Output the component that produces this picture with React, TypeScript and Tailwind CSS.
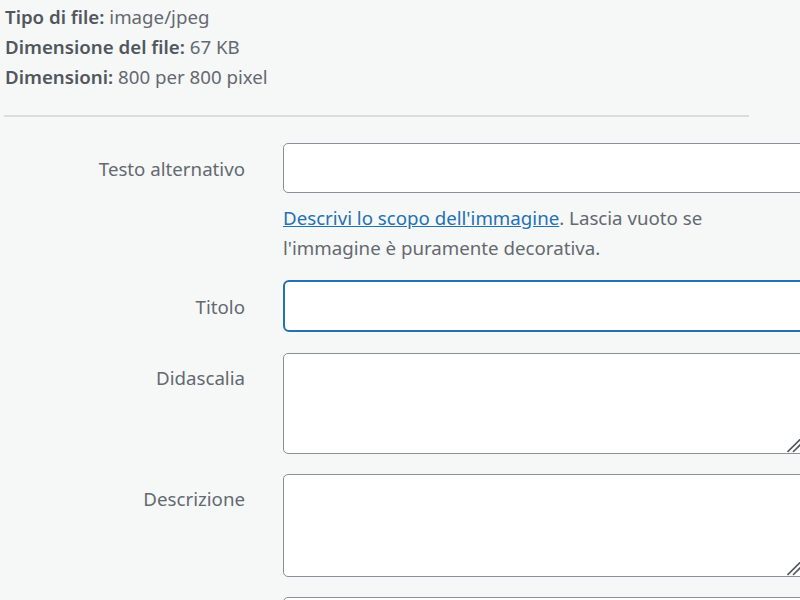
import React from "react";

function Grip() {
  return (
    <svg
      className="absolute left-[504px] bottom-[1px] pointer-events-none"
      width="16"
      height="14"
      viewBox="0 0 16 14"
    >
      <line x1="0.5" y1="13" x2="13.5" y2="0" stroke="#50575e" strokeWidth="1.6" />
      <line x1="6" y1="13" x2="16" y2="3" stroke="#50575e" strokeWidth="1.6" />
    </svg>
  );
}

export default function App() {
  return (
    <div className="w-[800px] h-[600px] overflow-hidden bg-[#f6f7f7] text-[18.7px] leading-[30px] text-[#646970] font-['Noto_Sans',sans-serif]">
      <div className="pl-[5px] pt-[2px]">
        <div><b className="font-semibold text-[#50575e]">Tipo di file:</b> image/jpeg</div>
        <div><b className="font-semibold text-[#50575e]">Dimensione del file:</b> 67 KB</div>
        <div><b className="font-semibold text-[#50575e]">Dimensioni:</b> 800 per 800 pixel</div>
      </div>
      <div className="ml-[4px] mt-[23px] w-[745px] h-[2px] bg-[#dcdcde]" />
      <div className="mt-[26px] flex flex-col">
        <div className="flex">
          <label className="w-[245px] shrink-0 text-right pt-[11px]">Testo alternativo</label>
          <div className="ml-[38px] w-[523px] shrink-0">
            <input className="block w-full h-[50px] bg-white border border-[#8c8f94] rounded-[5px] outline-none" />
            <p className="mt-[10px] text-[#646970]">
              <a className="text-[#2271b1] underline" href="#">Descrivi lo scopo dell'immagine</a>. Lascia vuoto se
              <br />l'immagine è puramente decorativa.
            </p>
          </div>
        </div>
        <div className="flex mt-[17px]">
          <label className="w-[245px] shrink-0 text-right pt-[12px]">Titolo</label>
          <div className="ml-[38px] w-[523px] shrink-0">
            <input className="block w-full h-[52px] bg-white border-2 border-[#2271b1] rounded-[6px] outline-none" />
          </div>
        </div>
        <div className="flex mt-[21px]">
          <label className="w-[245px] shrink-0 text-right pt-[10px]">Didascalia</label>
          <div className="ml-[38px] w-[523px] shrink-0 relative">
            <textarea className="block w-full h-[101px] bg-white border border-[#8c8f94] rounded-[5px] outline-none resize-none" />
            <Grip />
          </div>
        </div>
        <div className="flex mt-[20px]">
          <label className="w-[245px] shrink-0 text-right pt-[10px]">Descrizione</label>
          <div className="ml-[38px] w-[523px] shrink-0 relative">
            <textarea className="block w-full h-[103px] bg-white border border-[#8c8f94] rounded-[5px] outline-none resize-none" />
            <Grip />
          </div>
        </div>
        <div className="flex mt-[20px]">
          <div className="w-[245px] shrink-0" />
          <div className="ml-[38px] w-[523px] shrink-0">
            <input className="block w-full h-[50px] bg-white border border-[#8c8f94] rounded-[5px] outline-none" />
          </div>
        </div>
      </div>
    </div>
  );
}
